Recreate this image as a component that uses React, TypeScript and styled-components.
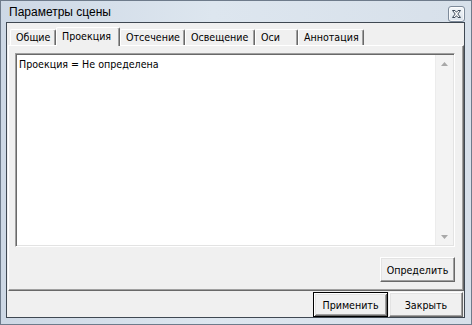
import React from 'react';
import styled, { createGlobalStyle, css } from 'styled-components';

const UI_FONT = `"DejaVu Sans Condensed", "Liberation Sans", sans-serif`;
const TITLE_FONT = `"Liberation Sans", "Noto Sans", sans-serif`;

const Global = createGlobalStyle`
  html, body { margin: 0; padding: 0; background: #ffffff; }
  body { width: 472px; height: 325px; overflow: hidden; }
`;

const Window = styled.div`
  box-sizing: border-box;
  width: 472px;
  height: 325px;
  border: 1px solid #6e7b8b;
  background: linear-gradient(to right, #cdd8e5 0%, #dde6ef 45%, #d7e0ea 100%);
  display: flex;
  flex-direction: column;
  padding: 0 6px 6px 5px;
`;

const TitleBar = styled.div`
  height: 21px;
  display: flex;
  align-items: center;
  justify-content: space-between;
  padding-left: 3px;
`;

const Title = styled.span`
  font: 12px ${TITLE_FONT};
  color: #000;
  margin-top: 1px;
`;

const CloseButton = styled.div`
  box-sizing: border-box;
  width: 17px;
  height: 16px;
  margin-top: 4px;
  border: 1px solid #7d8a9a;
  border-radius: 3px;
  background: linear-gradient(#f4f7fa, #dbe3ec);
  box-shadow: inset 0 0 0 1px rgba(255, 255, 255, 0.7);
  display: flex;
  align-items: center;
  justify-content: center;
`;

const Client = styled.div`
  flex: 1;
  display: flex;
  flex-direction: column;
  border: 1px solid #3f4852;
  background: #f0f0f0;
  font: 10.6px ${UI_FONT};
  color: #000;
`;

const TabArea = styled.div`
  flex: 1;
  display: flex;
  flex-direction: column;
  padding: 4px 0 0 1px;
`;

const TabStrip = styled.div`
  display: flex;
  align-items: flex-end;
  height: 19px;
  padding-left: 2px;
  margin-bottom: -1px;
  position: relative;
  z-index: 1;
`;

const Tab = styled.div<{ $w: number; $active?: boolean }>`
  box-sizing: border-box;
  width: ${(p) => p.$w}px;
  height: ${(p) => (p.$active ? 19 : 16)}px;
  margin-bottom: ${(p) => (p.$active ? 0 : 1)}px;
  padding: ${(p) => (p.$active ? '1px 0 0 5px' : '0 0 0 5px')};
  border-top: 1px solid #ffffff;
  border-left: 1px solid #ffffff;
  border-right: 1px solid #696969;
  box-shadow: inset -1px 0 0 #a0a0a0;
  border-radius: 2px 2px 0 0;
  background: #f0f0f0;
  line-height: 14px;
  white-space: nowrap;
`;

const Panel = styled.div`
  flex: 1;
  box-sizing: border-box;
  border: 1px solid;
  border-color: #ffffff #696969 #696969 #ffffff;
  box-shadow: inset -1px -1px 0 #a0a0a0;
  padding: 7px 8px 8px 6px;
  display: flex;
  flex-direction: column;
  gap: 10px;
`;

const Memo = styled.div`
  flex: 1;
  display: flex;
  border: 1px solid;
  border-color: #a0a0a0 #ffffff #ffffff #a0a0a0;
  box-shadow: inset 1px 1px 0 #696969, inset -1px -1px 0 #e3e3e3;
  background: #ffffff;
  padding: 1px;
`;

const MemoText = styled.div`
  flex: 1;
  padding: 2px 0 0 2px;
  line-height: 14px;
`;

const ScrollBar = styled.div`
  width: 17px;
  display: flex;
  flex-direction: column;
  justify-content: space-between;
  align-items: center;
  background: #f3f3f3;
  border-left: 1px solid #ececec;
`;

const Arrow = styled.div`
  height: 17px;
  display: flex;
  align-items: center;
  justify-content: center;
`;

const ButtonRow = styled.div`
  display: flex;
  justify-content: flex-end;
`;

const Button = styled.button<{ $w?: number; $default?: boolean }>`
  box-sizing: border-box;
  width: ${(p) => p.$w ?? 75}px;
  height: 25px;
  padding: 0;
  margin: 0;
  background: #f0f0f0;
  font: 10.6px ${UI_FONT};
  color: #000;
  border: 1px solid;
  border-color: #ffffff #696969 #696969 #ffffff;
  box-shadow: inset -1px -1px 0 #a0a0a0, inset 1px 1px 0 #e3e3e3;
  ${(p) =>
    p.$default &&
    css`
      border-color: #000;
      box-shadow: inset 1px 1px 0 #ffffff, inset -1px -1px 0 #696969,
        inset 2px 2px 0 #e3e3e3, inset -2px -2px 0 #a0a0a0;
    `}
`;

const BottomBar = styled.div`
  height: 26px;
  display: flex;
  justify-content: flex-end;
  align-items: flex-end;
  padding-right: 1px;
  gap: 1px;
`;

const tabs = [
  { label: 'Общие', w: 46 },
  { label: 'Проекция', w: 64, active: true },
  { label: 'Отсечение', w: 65 },
  { label: 'Освещение', w: 70 },
  { label: 'Оси', w: 43 },
  { label: 'Аннотация', w: 66 },
];

export default function App() {
  return (
    <>
      <Global />
      <Window>
        <TitleBar>
          <Title>Параметры сцены</Title>
          <CloseButton>
            <svg width="9" height="8" viewBox="0 0 9 8">
              <path
                d="M0.5 0.5h2.5l1.5 1.8 1.5-1.8h2.5l-2.7 3.5 2.7 3.5h-2.5l-1.5-1.8-1.5 1.8h-2.5l2.7-3.5z"
                fill="#ffffff"
                stroke="#3d4a5a"
                strokeWidth="1"
                strokeLinejoin="round"
              />
            </svg>
          </CloseButton>
        </TitleBar>
        <Client>
          <TabArea>
            <TabStrip>
              {tabs.map((t) => (
                <Tab key={t.label} $w={t.w} $active={t.active}>
                  {t.label}
                </Tab>
              ))}
            </TabStrip>
            <Panel>
              <Memo>
                <MemoText>Проекция = Не определена</MemoText>
                <ScrollBar>
                  <Arrow>
                    <svg width="7" height="4" viewBox="0 0 7 4">
                      <path d="M0 4L3.5 0L7 4z" fill="#a8a8a8" />
                    </svg>
                  </Arrow>
                  <Arrow>
                    <svg width="7" height="4" viewBox="0 0 7 4">
                      <path d="M0 0L3.5 4L7 0z" fill="#a8a8a8" />
                    </svg>
                  </Arrow>
                </ScrollBar>
              </Memo>
              <ButtonRow>
                <Button>Определить</Button>
              </ButtonRow>
            </Panel>
          </TabArea>
          <BottomBar>
            <Button $default>Применить</Button>
            <Button $w={74}>Закрыть</Button>
          </BottomBar>
        </Client>
      </Window>
    </>
  );
}
